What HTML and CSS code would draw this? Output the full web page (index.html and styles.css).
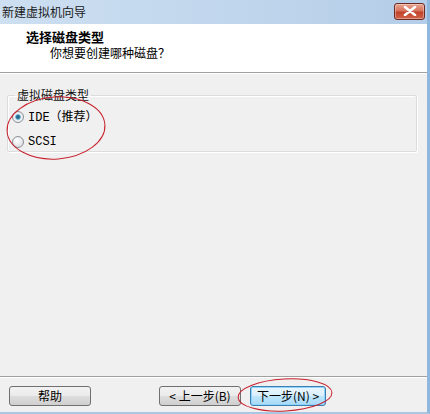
FILE: index.html
```html
<!DOCTYPE html>
<html lang="zh-CN">
<head>
<meta charset="utf-8">
<link rel="stylesheet" href="styles.css">
</head>
<body>
<div class="window">
  <div class="titlebar">
    <span class="title">新建虚拟机向导</span>
    <span class="close">
      <svg width="14" height="10" viewBox="0 0 14 10"><path d="M2 1 L12 9 M12 1 L2 9" stroke="#fff" stroke-width="2.6" stroke-linecap="round"/></svg>
    </span>
  </div>
  <div class="header">
    <div class="h-title">选择磁盘类型</div>
    <div class="h-sub">你想要创建哪种磁盘？</div>
  </div>
  <div class="content">
    <fieldset class="group">
      <legend>虚拟磁盘类型</legend>
      <div class="opt"><span class="radio checked"></span><span class="lbl"><span class="mono">IDE</span>（推荐）</span></div>
      <div class="opt"><span class="radio"></span><span class="lbl mono">SCSI</span></div>
    </fieldset>
  </div>
  <div class="footer">
    <button class="btn">帮助</button>
    <div class="spacer"></div>
    <button class="btn">&lt; 上一步(B)</button>
    <button class="btn focus">下一步(N) &gt;</button>
  </div>
  <svg class="marks" width="430" height="414" viewBox="0 0 430 414">
    <ellipse cx="56" cy="128" rx="49" ry="31" fill="none" stroke="#c8202c" stroke-width="1" transform="rotate(-4 56 128)"/>
    <ellipse cx="285" cy="395" rx="47" ry="16" fill="none" stroke="#c8202c" stroke-width="1" transform="rotate(-3 285 395)"/>
  </svg>
</div>
</body>
</html>
```
FILE: styles.css
```css
* { box-sizing: border-box; }
html, body { margin: 0; padding: 0; }
body {
  width: 430px; height: 414px; overflow: hidden;
  font-family: "Noto Sans CJK SC", "Liberation Sans", sans-serif;
  font-size: 12px; color: #000;
}
.window {
  position: relative;
  width: 430px; height: 414px;
  background: #f0f0f0;
  display: flex; flex-direction: column;
  border-right: 3px solid #8fb8dc;
  border-bottom: 2px solid #a9c7e3;
}
.titlebar {
  height: 24px; flex: none;
  background: linear-gradient(90deg, #cddff1 0%, #bfd5ec 60%, #b4cde8 100%);
  display: flex; align-items: center; justify-content: space-between;
  padding: 0 2px 0 2px;
}
.title { font-size: 12px; color: #1a1a1a; line-height: 14px; }
.close {
  width: 31px; height: 17px;
  margin-top: -2px;
  border: 1px solid #6b2a22; border-radius: 3px;
  background: linear-gradient(#e9a591 0%, #d8735c 45%, #c0432a 55%, #d2644a 100%);
  display: flex; align-items: center; justify-content: center;
  box-shadow: inset 0 0 0 1px rgba(255,255,255,0.35);
}
.header {
  height: 49px; flex: none;
  background: #fff;
  border-bottom: 1px solid #a0a0a0;
  box-shadow: 0 1px 0 #fff;
  padding: 5px 0 0 26px;
}
.h-title { font-weight: bold; font-size: 13px; line-height: 16px; }
.h-sub { padding-left: 24px; line-height: 15px; font-size: 12px; }
.content { flex: 1; padding: 15px 10px 0 7px; }
.group {
  margin: 0; height: 64px;
  border: 1px solid #dcdcdc; border-radius: 2px;
  box-shadow: inset 1px 1px 0 #fff, 1px 1px 0 #fff;
  padding: 5px 0 0 4px;
}
.group legend { padding: 0 2px; margin-left: 3px; font-size: 12px; line-height: 14px; color: #111; }
.opt { display: flex; align-items: center; gap: 4px; height: 25px; }
.opt:first-of-type { margin-top: -3px; }
.radio {
  width: 12px; height: 12px; border-radius: 50%;
  border: 1px solid #8c8f94;
  background: radial-gradient(circle at 40% 35%, #ffffff 0%, #e4e6ea 60%, #c9ccd2 100%);
  display: inline-block;
}
.radio.checked {
  background: radial-gradient(circle, #24596f 0%, #2e7fa3 25%, #88c3de 38%, #f0f3f6 45%, #dfe3e8 100%);
}
.mono { font-family: "Liberation Mono", "DejaVu Sans Mono", monospace; font-size: 12px; }
.lbl { line-height: 14px; }
.footer {
  height: 36px; flex: none;
  border-top: 1px solid #a0a0a0;
  box-shadow: inset 0 1px 0 #fff;
  display: flex; align-items: center;
  padding: 2px 0 0 9px;
}
.spacer { flex: 1; }
.btn {
  width: 82px; height: 20px;
  font-family: "Noto Sans CJK SC", sans-serif; font-size: 12px;
  padding: 0; line-height: 16px;
  border: 1px solid #707070; border-radius: 3px;
  background: linear-gradient(#f2f2f2 0%, #ebebeb 48%, #dddddd 52%, #cfcfcf 100%);
  color: #000;
}
.footer .btn + .btn { margin-left: 9px; }
.btn.focus {
  width: 76px; margin-right: 101px;
  border-color: #3c7fb1;
  background: linear-gradient(#eaf6fd 0%, #d9f0fc 48%, #bee6fd 52%, #a7d9f5 100%);
  box-shadow: inset 0 0 0 1px #8fd3ff;
}
.marks { position: absolute; left: 0; top: 0; pointer-events: none; }
```
